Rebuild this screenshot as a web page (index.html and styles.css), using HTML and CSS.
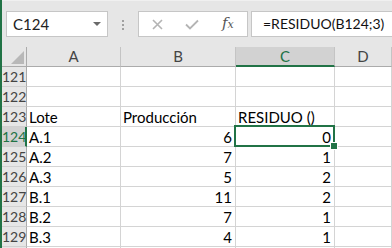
FILE: index.html
```
<!DOCTYPE html>
<html lang="es">
<head>
  <meta charset="UTF-8">
  <title>RESIDUO</title>
  <link rel="stylesheet" href="styles.css">
</head>
<body>
  <div class="app">
    <div class="formula-bar">
      <div class="name-box">
        <span>C124</span>
        <span class="caret"></span>
      </div>
      <div class="grip"><i></i><i></i><i></i></div>
      <div class="buttons">
        <svg class="cancel" width="11" height="11" viewBox="0 0 11 11">
          <path d="M1 1L10 10M10 1L1 10" stroke="#b4b4b4" stroke-width="1.6" fill="none"/>
        </svg>
        <svg class="enter" width="14" height="11" viewBox="0 0 14 11">
          <path d="M1 5.5L5 9.5L13 1.5" stroke="#b4b4b4" stroke-width="1.8" fill="none"/>
        </svg>
        <span class="fx">f<small>x</small></span>
      </div>
      <div class="formula">=RESIDUO(B124;3)</div>
    </div>

    <div class="sheet">
      <div class="corner"><span class="tri"></span></div>
      <div class="colhead">A</div>
      <div class="colhead">B</div>
      <div class="colhead active">C</div>
      <div class="colhead">D</div>

      <div class="rowhead">121</div><div class="cell"></div><div class="cell"></div><div class="cell"></div><div class="cell"></div>
      <div class="rowhead">122</div><div class="cell"></div><div class="cell"></div><div class="cell"></div><div class="cell"></div>
      <div class="rowhead">123</div><div class="cell">Lote</div><div class="cell">Producción</div><div class="cell">RESIDUO ()</div><div class="cell"></div>
      <div class="rowhead active">124</div><div class="cell">A.1</div><div class="cell num">6</div><div class="cell num selected">0<span class="handle"></span></div><div class="cell"></div>
      <div class="rowhead">125</div><div class="cell">A.2</div><div class="cell num">7</div><div class="cell num">1</div><div class="cell"></div>
      <div class="rowhead">126</div><div class="cell">A.3</div><div class="cell num">5</div><div class="cell num">2</div><div class="cell"></div>
      <div class="rowhead">127</div><div class="cell">B.1</div><div class="cell num">11</div><div class="cell num">2</div><div class="cell"></div>
      <div class="rowhead">128</div><div class="cell">B.2</div><div class="cell num">7</div><div class="cell num">1</div><div class="cell"></div>
      <div class="rowhead">129</div><div class="cell">B.3</div><div class="cell num">4</div><div class="cell num">1</div><div class="cell"></div>
      <div class="rowhead"></div><div class="cell"></div><div class="cell"></div><div class="cell"></div><div class="cell"></div>
    </div>
  </div>
</body>
</html>
```

FILE: styles.css
```
html, body {
  margin: 0;
  height: 100%;
  overflow: hidden;
  background: #fff;
}
.app {
  border-left: 2px solid #217346;
  height: 100%;
  font-family: Lato, "Liberation Sans", sans-serif;
  color: #000;
}
.formula-bar {
  display: flex;
  align-items: flex-start;
  height: 47px;
  padding: 11px 0 0 4px;
  box-sizing: border-box;
  background: #e6e6e6;
  border-top: 1px solid #f0f0f0;
}
.name-box {
  width: 102px;
  height: 26px;
  box-sizing: border-box;
  margin-top: -1px;
  border: 1px solid #c6c6c6;
  background: #fff;
  display: flex;
  align-items: center;
  justify-content: space-between;
  padding: 0 6px 0 6px;
  font-size: 15px;
  color: #222;
}
.caret {
  width: 0;
  height: 0;
  border-left: 4px solid transparent;
  border-right: 4px solid transparent;
  border-top: 4px solid #6a6a6a;
}
.grip {
  width: 30px;
  height: 25px;
  display: flex;
  flex-direction: column;
  align-items: center;
  justify-content: center;
  gap: 2px;
}
.grip i {
  width: 2px;
  height: 2px;
  background: #a0a0a0;
}
.buttons {
  width: 110px;
  height: 26px;
  box-sizing: border-box;
  margin-top: -1px;
  border: 1px solid #c6c6c6;
  background: #fff;
  display: flex;
  align-items: center;
}
.cancel {
  margin-left: 13px;
}
.enter {
  margin-left: 22px;
}
.fx {
  margin-left: 23px;
  font-family: "DejaVu Serif", "Liberation Serif", serif;
  font-style: italic;
  font-size: 15px;
  color: #555;
  margin-top: -2px;
}
.fx small {
  font-size: 11px;
}
.formula {
  flex: 1;
  height: 26px;
  box-sizing: border-box;
  margin: -1px 0 0 3px;
  border: 1px solid #c6c6c6;
  border-right: none;
  background: #fff;
  padding: 3px 0 0 11px;
  font-size: 14px;
  color: #111;
}
.sheet {
  display: grid;
  grid-template-columns: 25px 94px 115px 99px 1fr;
  grid-auto-rows: 20px;
  font-size: 15px;
}
.corner,
.colhead,
.rowhead {
  background: #e6e6e6;
  color: #444;
  box-sizing: border-box;
}
.corner {
  border-right: 1px solid #ababab;
  border-bottom: 1px solid #ababab;
  position: relative;
}
.tri {
  position: absolute;
  right: 2px;
  bottom: 2px;
  width: 0;
  height: 0;
  border-left: 13px solid transparent;
  border-bottom: 13px solid #b8b8b8;
}
.colhead {
  border-right: 1px solid #c4c4c4;
  border-bottom: 1px solid #ababab;
  text-align: center;
  line-height: 19px;
}
.colhead.active {
  background: #d2d2d2;
  color: #217346;
  border-bottom: 2px solid #217346;
}
.rowhead {
  border-right: 1px solid #ababab;
  border-bottom: 1px solid #d0d0d0;
  text-align: center;
  line-height: 20px;
  font-size: 14px;
}
.rowhead.active {
  background: #d2d2d2;
  color: #217346;
  border-right: 2px solid #217346;
}
.cell {
  box-sizing: border-box;
  border-right: 1px solid #d4d4d4;
  border-bottom: 1px solid #d4d4d4;
  padding: 1px 3px 0 2px;
  line-height: 19px;
  white-space: nowrap;
}
.num {
  text-align: right;
}
.selected {
  position: relative;
}
.selected::after {
  content: "";
  position: absolute;
  left: -2px;
  top: -2px;
  right: -1px;
  bottom: -1px;
  border: 2px solid #217346;
}
.handle {
  position: absolute;
  right: -4px;
  bottom: -4px;
  width: 6px;
  height: 6px;
  background: #217346;
  border: 1px solid #fff;
  z-index: 1;
}
```
